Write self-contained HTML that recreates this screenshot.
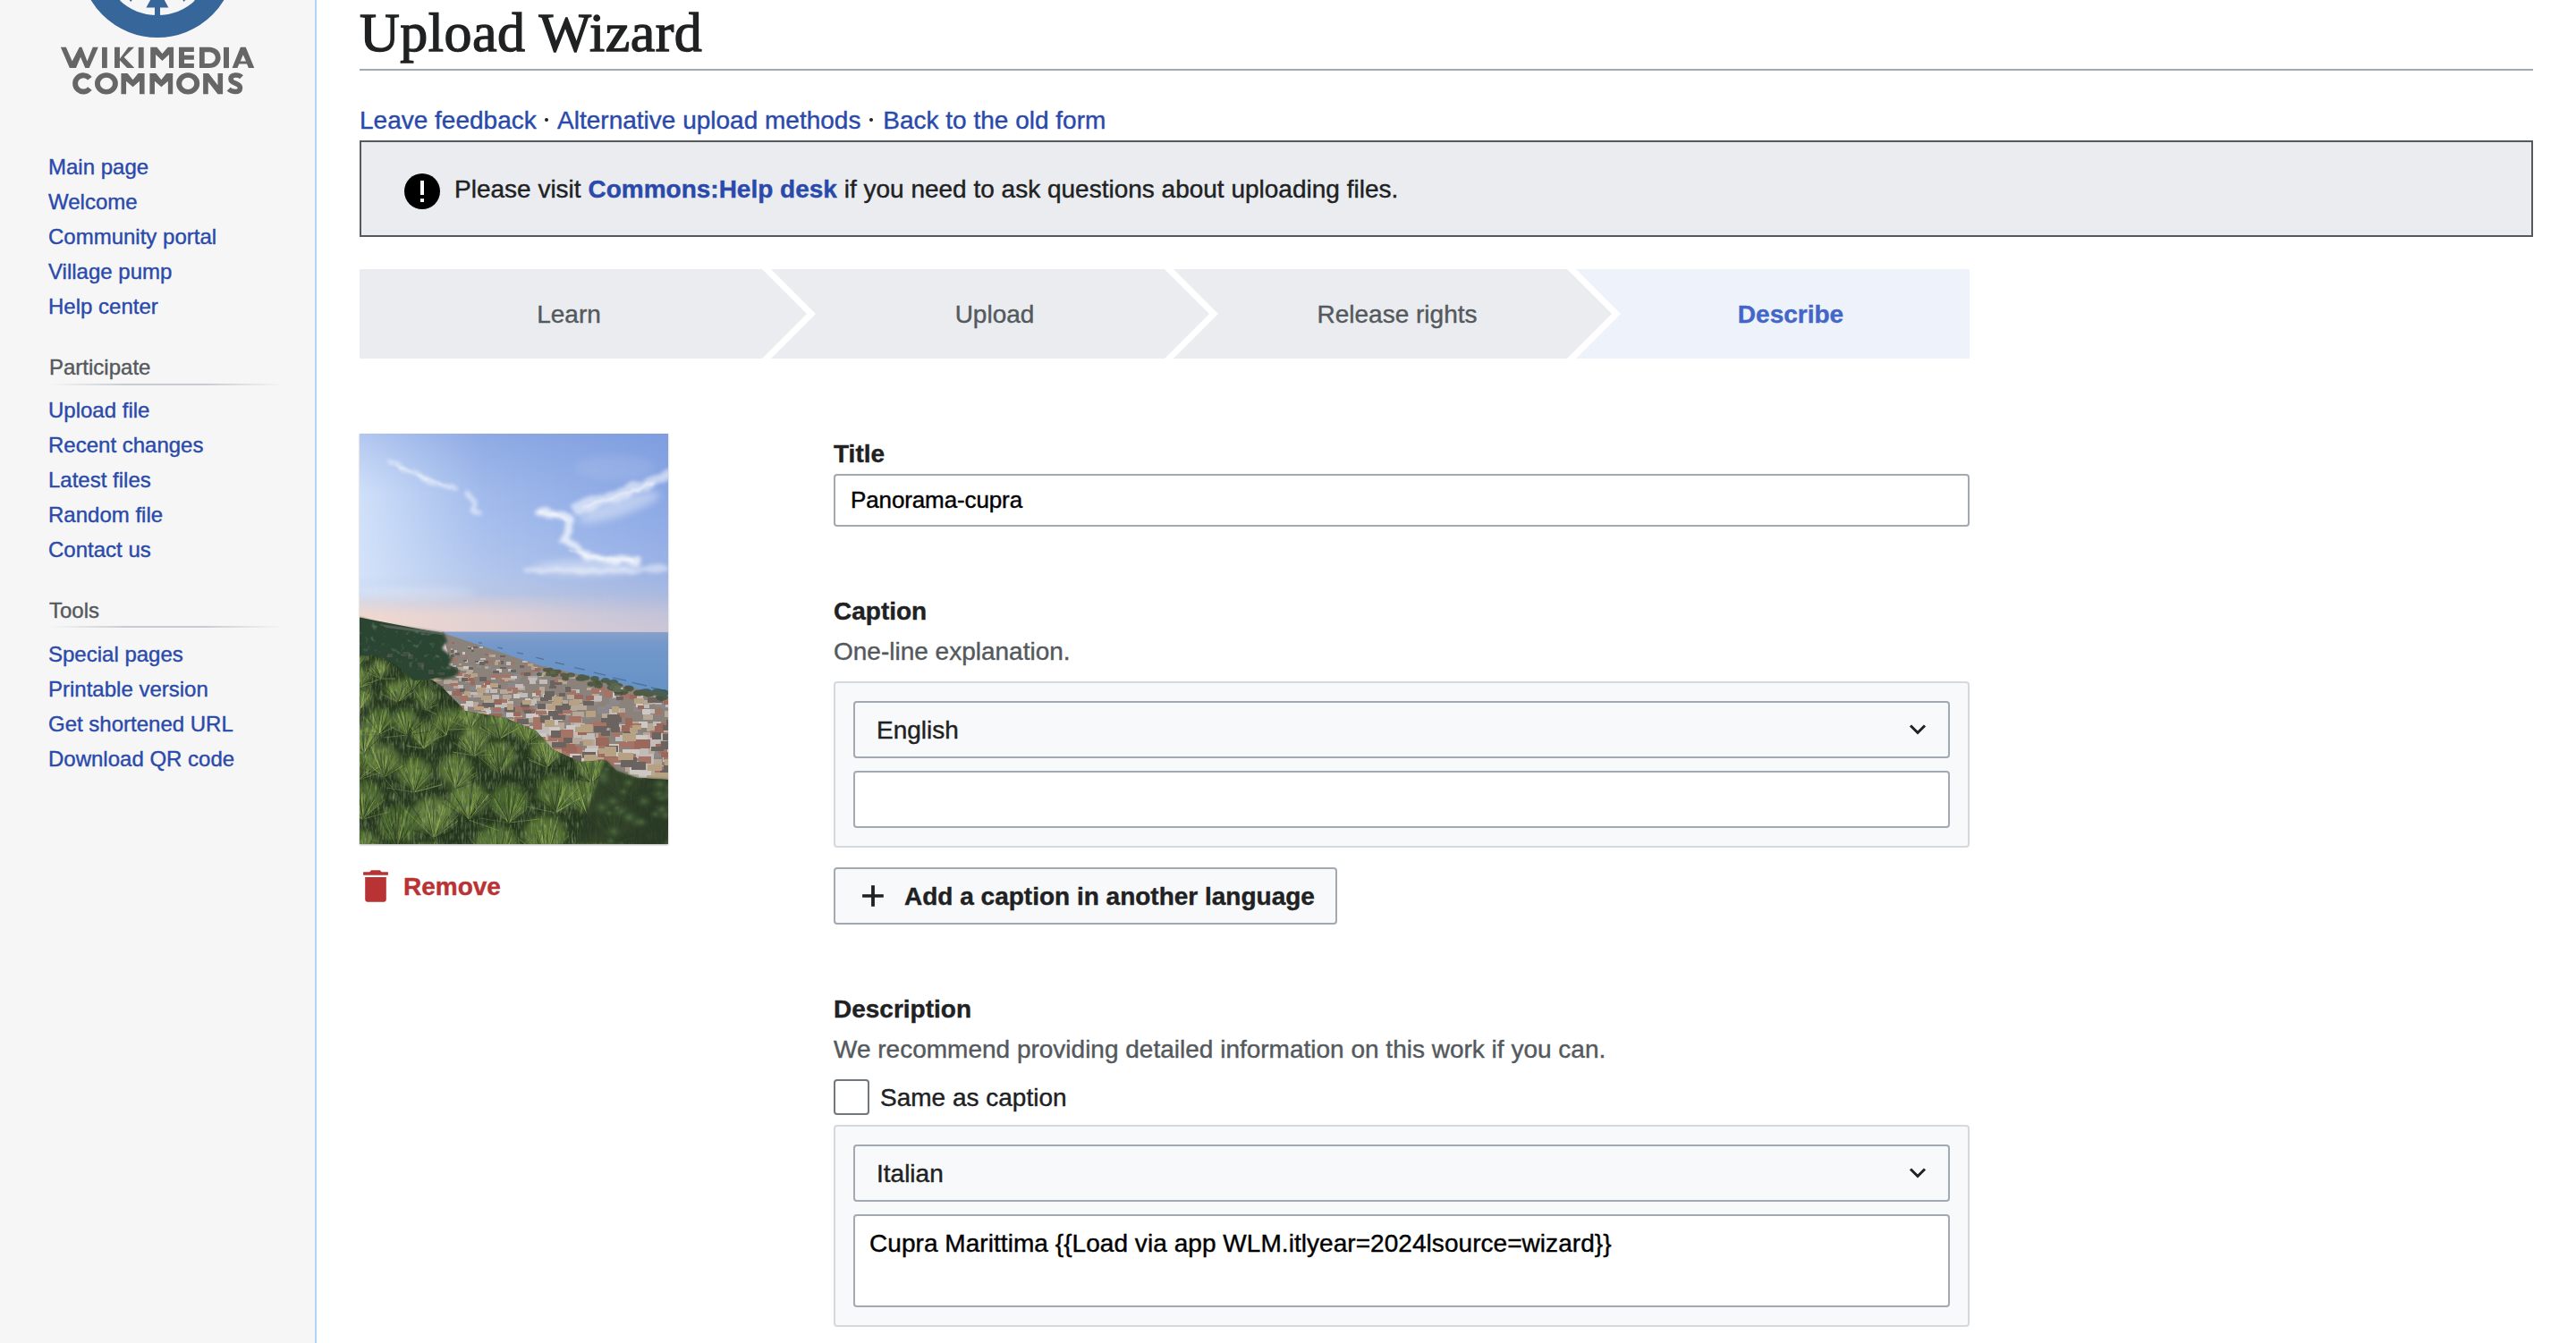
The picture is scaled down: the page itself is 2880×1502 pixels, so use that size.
<!DOCTYPE html>
<html><head><meta charset="utf-8">
<style>
html,body{margin:0;padding:0;}
body{width:2880px;height:1502px;overflow:hidden;background:#fff;position:relative;font-family:"Liberation Sans",sans-serif;color:#202122;-webkit-text-stroke-width:0.4px;}
.a{position:absolute;white-space:nowrap;line-height:1;}
#side{position:absolute;left:0;top:0;width:352px;height:1502px;background:#f6f6f6;border-right:2px solid #b0d4f6;}
.nav{position:absolute;left:54px;font-size:24px;line-height:39px;color:#2a4aab;white-space:nowrap;}
.nav div{height:39px;}
.ph{position:absolute;left:55px;font-size:24px;line-height:1;color:#54595d;}
.sep{position:absolute;left:55px;width:262px;height:2px;background:linear-gradient(to right,rgba(200,204,209,0),#c8ccd1 33%,#c8ccd1 66%,rgba(200,204,209,0));}
.lnk{color:#2a4aab;}
.box{position:absolute;box-sizing:border-box;border-radius:4px;}
</style></head><body>
<div id="side">
<svg style="position:absolute;left:0;top:0" width="352" height="120" viewBox="0 0 352 120">
<defs><clipPath id="ring"><rect x="0" y="0" width="352" height="120"/></clipPath></defs>
<circle cx="176" cy="-45" r="74.5" fill="none" stroke="#36669a" stroke-width="25"/>
<polygon points="176,-14.3 163.4,8.6 188.4,8.6" fill="#36669a"/><rect x="105" y="0" width="29.2" height="1.7" fill="#36669a"/><rect x="217.6" y="0" width="30" height="1.7" fill="#36669a"/><polygon points="144.5,0 147.5,0 146.6,1.9" fill="#36669a"/><polygon points="204.5,0 207.5,0 205.3,1.9" fill="#36669a"/>
<rect x="173" y="8" width="6" height="12" fill="#36669a"/>
<g transform="translate(60 45) scale(0.0892857)" fill="#666">
<polygon points="88,88 155,88 232,262 322,88 352,88 420,262 490,88 558,88 445,348 395,348 337,210 280,348 200,348"/>
<rect x="605" y="88" width="65" height="260"/>
<polygon points="762,88 828,88 828,232 935,88 1008,88 882,214 1012,348 920,348 828,252 828,348 762,348"/>
<rect x="1062" y="88" width="66" height="260"/>
<polygon points="1212,88 1292,88 1360,168 1430,88 1502,88 1502,348 1445,348 1445,178 1360,258 1278,178 1278,348 1212,348"/>
<polygon points="1568,88 1757,88 1757,145 1635,145 1635,188 1757,188 1757,243 1635,243 1635,290 1757,290 1757,348 1568,348"/>
<path fill-rule="evenodd" d="M1825 88H1945C2035 88 2090 145 2090 218C2090 290 2035 348 1945 348H1825ZM1890 147V292H1938C1993 292 2025 262 2025 218C2025 175 1993 147 1938 147Z"/>
<rect x="2128" y="88" width="67" height="260"/>
<path fill-rule="evenodd" d="M2340 88H2405L2512 348H2440L2420 298H2322L2300 348H2235ZM2338 262H2408L2372 182Z"/>
<path fill="none" stroke="#666" stroke-width="66" d="M452.4 479.2A102 102 0 1 0 452.4 604.8"/>
<path fill-rule="evenodd" d="M660 405A145 136.5 0 1 1 660 678A145 136.5 0 1 1 660 405ZM660 468A79 74 0 1 0 660 616A79 74 0 1 0 660 468Z"/>
<polygon points="845,415 925,415 992,495 1058,415 1138,415 1138,675 1075,675 1075,512 992,584 908,512 908,675 845,675"/>
<polygon points="1203,415 1282,415 1348,495 1412,415 1492,415 1492,675 1432,675 1432,512 1348,584 1265,512 1265,675 1203,675"/>
<path fill-rule="evenodd" d="M1682 405A146 136.5 0 1 1 1682 678A146 136.5 0 1 1 1682 405ZM1682 468A79 74 0 1 0 1682 616A79 74 0 1 0 1682 468Z"/>
<polygon points="1872,415 1940,415 2055,562 2055,415 2118,415 2118,675 2055,675 1935,522 1935,675 1872,675"/>
<path fill="none" stroke="#666" stroke-width="62" d="M2352 462C2320 430 2218 418 2218 488C2218 552 2335 528 2335 598C2335 666 2228 648 2192 612"/>
</g>
</svg>
<div class="nav" style="top:167px"><div>Main page</div><div>Welcome</div><div>Community portal</div><div>Village pump</div><div>Help center</div></div>
<div class="ph" style="top:399px">Participate</div>
<div class="sep" style="top:429px"></div>
<div class="nav" style="top:439px"><div>Upload file</div><div>Recent changes</div><div>Latest files</div><div>Random file</div><div>Contact us</div></div>
<div class="ph" style="top:671px">Tools</div>
<div class="sep" style="top:700px"></div>
<div class="nav" style="top:712px"><div>Special pages</div><div>Printable version</div><div>Get shortened URL</div><div>Download QR code</div></div>
</div>

<!-- title -->
<div class="a" style="left:402px;top:5px;font-family:'Liberation Serif',serif;font-size:62px;letter-spacing:0.5px;-webkit-text-stroke:1.3px #202122;color:#202122;">Upload Wizard</div>
<div style="position:absolute;left:402px;top:77px;width:2430px;height:2px;background:#a2a9b1;"></div>
<div class="a lnk" style="left:402px;top:121px;font-size:28px;">Leave feedback <span style="position:relative;color:transparent">·<i style="position:absolute;left:1.5px;top:13px;width:4px;height:4px;border-radius:50%;background:#202122"></i></span> Alternative upload methods <span style="position:relative;color:transparent">·<i style="position:absolute;left:1.5px;top:13px;width:4px;height:4px;border-radius:50%;background:#202122"></i></span> Back to the old form</div>

<!-- notice -->
<div class="box" style="left:402px;top:157px;width:2430px;height:108px;border:2px solid #54595d;background:#eaecf0;border-radius:0;"></div>
<svg style="position:absolute;left:452px;top:194px" width="40" height="40" viewBox="0 0 40 40"><circle cx="20" cy="20" r="20" fill="#000"/><rect x="18" y="8" width="4" height="16" fill="#fff"/><rect x="18" y="28.2" width="4" height="3.8" fill="#fff"/></svg>
<div class="a" style="left:508px;top:198px;font-size:28px;color:#202122;">Please visit <b class="lnk">Commons:Help desk</b> if you need to ask questions about uploading files.</div>

<!-- steps -->
<svg style="position:absolute;left:402px;top:301px" width="1800" height="100" viewBox="0 0 1800 100">
<polygon points="0,0 450,0 500,50 450,100 0,100" fill="#eaecf0"/>
<polygon points="460,0 900,0 950,50 900,100 460,100 510,50" fill="#eaecf0"/>
<polygon points="910,0 1350,0 1400,50 1350,100 910,100 960,50" fill="#eaecf0"/>
<polygon points="1360,0 1800,0 1800,100 1360,100 1410,50" fill="#eef2fa"/>
</svg>
<div class="a" style="left:536px;top:338px;width:200px;text-align:center;font-size:28px;color:#54595d;">Learn</div>
<div class="a" style="left:1012px;top:338px;width:200px;text-align:center;font-size:28px;color:#54595d;">Upload</div>
<div class="a" style="left:1412px;top:338px;width:300px;text-align:center;font-size:28px;color:#54595d;">Release rights</div>
<div class="a" style="left:1902px;top:338px;width:200px;text-align:center;font-size:28px;font-weight:bold;color:#4366c8;">Describe</div>

<!-- image -->
<svg id="img" style="position:absolute;left:402px;top:485px;box-shadow:0 1px 2px rgba(0,0,0,0.3)" width="345" height="459" viewBox="0 0 345 459">
<defs>
<linearGradient id="sky" x1="0" y1="0" x2="0" y2="225" gradientUnits="userSpaceOnUse">
<stop offset="0" stop-color="#809fe0"/><stop offset="0.45" stop-color="#97b2e9"/><stop offset="0.68" stop-color="#a5bbe8"/><stop offset="0.8" stop-color="#b3c0e0"/><stop offset="0.9" stop-color="#cdc8d8"/><stop offset="1" stop-color="#d6c9d2"/>
</linearGradient>
<linearGradient id="skyr" x1="0" y1="0" x2="345" y2="0" gradientUnits="userSpaceOnUse">
<stop offset="0" stop-color="#dbe9fc" stop-opacity="0.85"/><stop offset="0.4" stop-color="#d8e7fb" stop-opacity="0.25"/><stop offset="1" stop-color="#7896de" stop-opacity="0.2"/>
</linearGradient>
<linearGradient id="skyv" x1="0" y1="0" x2="0" y2="225" gradientUnits="userSpaceOnUse">
<stop offset="0" stop-color="#fff" stop-opacity="0.65"/><stop offset="0.3" stop-color="#fff" stop-opacity="1"/><stop offset="0.7" stop-color="#fff" stop-opacity="1"/><stop offset="1" stop-color="#fff" stop-opacity="0.3"/>
</linearGradient>
<mask id="skm"><rect width="345" height="225" fill="url(#skyv)"/></mask>
<linearGradient id="pinkx" x1="0" y1="0" x2="345" y2="0" gradientUnits="userSpaceOnUse">
<stop offset="0" stop-color="#f4d8ca" stop-opacity="0.9"/><stop offset="0.55" stop-color="#e8d3d0" stop-opacity="0.5"/><stop offset="1" stop-color="#c8c8dc" stop-opacity="0.15"/>
</linearGradient>
<linearGradient id="pinky" x1="0" y1="178" x2="0" y2="222" gradientUnits="userSpaceOnUse">
<stop offset="0" stop-color="#fff" stop-opacity="0"/><stop offset="0.6" stop-color="#fff" stop-opacity="1"/><stop offset="1" stop-color="#fff" stop-opacity="1"/>
</linearGradient>
<mask id="pm"><rect x="0" y="150" width="345" height="80" fill="url(#pinky)"/></mask>
<linearGradient id="sea" x1="0" y1="222" x2="0" y2="297" gradientUnits="userSpaceOnUse">
<stop offset="0" stop-color="#86a0cc"/><stop offset="0.2" stop-color="#7398c9"/><stop offset="1" stop-color="#6391c6"/>
</linearGradient>
<radialGradient id="pg" cx="0.5" cy="0.4" r="0.55">
<stop offset="0" stop-color="#93b250" stop-opacity="1"/><stop offset="0.45" stop-color="#6b8c3a" stop-opacity="0.95"/><stop offset="0.8" stop-color="#3f5a28" stop-opacity="0.6"/><stop offset="1" stop-color="#2a3d1e" stop-opacity="0"/>
</radialGradient>
<radialGradient id="tg" cx="0.5" cy="0.45" r="0.55">
<stop offset="0" stop-color="#4f6a3e" stop-opacity="0.9"/><stop offset="1" stop-color="#2a3d26" stop-opacity="0"/>
</radialGradient>
<filter id="cb" x="-20%" y="-50%" width="140%" height="200%"><feTurbulence type="fractalNoise" baseFrequency="0.06" numOctaves="2" seed="4" result="n"/><feDisplacementMap in="SourceGraphic" in2="n" scale="10" xChannelSelector="R" yChannelSelector="G" result="d"/><feGaussianBlur in="d" stdDeviation="2"/></filter>
<filter id="cb1" x="-20%" y="-50%" width="140%" height="200%"><feTurbulence type="fractalNoise" baseFrequency="0.12" numOctaves="2" seed="9" result="n"/><feDisplacementMap in="SourceGraphic" in2="n" scale="7" xChannelSelector="R" yChannelSelector="G" result="d"/><feGaussianBlur in="d" stdDeviation="0.8"/></filter>
<filter id="cb2" x="-30%" y="-80%" width="160%" height="260%"><feGaussianBlur stdDeviation="5"/></filter>
<filter id="b05"><feGaussianBlur stdDeviation="0.5"/></filter>
<filter id="ntex" x="0" y="0" width="1" height="1">
<feTurbulence type="turbulence" baseFrequency="0.35 0.07" numOctaves="2" seed="17"/>
<feColorMatrix type="matrix" values="0 0 0 0 0.62  0 0 0 0 0.76  0 0 0 0 0.36  2.2 0 0 0 -0.55"/>
<feComposite in2="SourceGraphic" operator="in"/>
</filter>
<filter id="ntex2" x="0" y="0" width="1" height="1">
<feTurbulence type="turbulence" baseFrequency="0.3 0.09" numOctaves="2" seed="23"/>
<feColorMatrix type="matrix" values="0 0 0 0 0.08  0 0 0 0 0.12  0 0 0 0 0.06  2.4 0 0 0 -0.5"/>
<feComposite in2="SourceGraphic" operator="in"/>
</filter>
<filter id="pblur" x="-10%" y="-10%" width="120%" height="120%"><feGaussianBlur stdDeviation="3.5"/></filter>
<filter id="b15" x="-10%" y="-10%" width="120%" height="120%"><feGaussianBlur stdDeviation="1.5"/></filter>
<filter id="b07"><feGaussianBlur stdDeviation="0.7"/></filter>
<filter id="texh" x="0" y="0" width="1" height="1">
<feTurbulence type="fractalNoise" baseFrequency="0.15" numOctaves="2" seed="13"/>
<feColorMatrix type="matrix" values="0 0 0 0 0.28  0 0 0 0 0.38  0 0 0 0 0.24  0 0 0 -3 1.2"/>
<feComposite in2="SourceGraphic" operator="in"/>
</filter>
<clipPath id="cpt"><polygon points="93.0,223.0 150.0,242.0 197.0,258.0 295.0,281.0 345.0,295.0 345.0,392.0 300.0,392.0 246.0,372.0 216.0,358.0 197.0,338.0 163.0,323.0 118.0,315.0 90.0,286.0 52.0,290.0 52.0,262.0 100.0,250.0"/></clipPath>
<clipPath id="cpp"><polygon points="0,248 20,249 40,258 60,276 80,275 90,281 118,310 163,318 197,332 216,353 246,367 275,365 287,377 310,385 345,387 345,459 0,459"/></clipPath>
<clipPath id="cpd"><polygon points="275.0,365.0 287.0,377.0 310.0,385.0 345.0,387.0 345.0,459.0 240.0,459.0"/></clipPath>
<clipPath id="cph"><polygon points="0.0,205.5 22.0,213.0 60.0,218.0 94.0,223.0 98.0,232.0 92.0,240.0 104.0,250.0 100.0,258.0 112.0,266.0 106.0,272.0 92.0,275.0 80.0,271.0 62.0,275.0 40.0,262.0 20.0,252.0 0.0,250.0"/></clipPath>
</defs>
<rect width="345" height="459" fill="url(#sky)"/>
<rect width="345" height="225" fill="url(#skyr)" mask="url(#skm)"/>
<rect x="0" y="150" width="345" height="80" fill="url(#pinkx)" mask="url(#pm)"/>
<g fill="#fff" filter="url(#cb2)" opacity="0.4">
<ellipse cx="285" cy="38" rx="45" ry="14" opacity="0.25"/>
<ellipse cx="290" cy="82" rx="48" ry="10" transform="rotate(-18 290 82)"/>
<ellipse cx="255" cy="150" rx="60" ry="8"/>
<ellipse cx="60" cy="178" rx="70" ry="6" opacity="0.6"/>
</g>
<g fill="none" stroke="#fff" stroke-linecap="round" filter="url(#cb)">
<path d="M33 31 Q62 45 86 55 Q100 61 110 63" stroke-width="4" stroke-opacity="0.55"/>
<path d="M120 67 Q131 76 125 85 Q128 89 134 90" stroke-width="6" stroke-opacity="0.55"/>
<path d="M243 84 Q290 70 345 46" stroke-width="12" stroke-opacity="0.55"/>
<path d="M200 88 Q222 88 233 96 Q238 108 228 118 Q240 130 258 138 Q285 143 310 142" stroke-width="8" stroke-opacity="0.7"/>
<path d="M186 152 Q250 158 343 150" stroke-width="6" stroke-opacity="0.45"/>
</g>
<g fill="none" stroke="#fff" stroke-linecap="round" filter="url(#cb1)" stroke-opacity="0.5">
<path d="M203 89 Q225 90 231 98" stroke-width="3"/>
<path d="M250 82 Q290 70 330 55" stroke-width="2.5"/>
<path d="M236 130 Q270 142 305 141" stroke-width="2.5"/>
<path d="M40 35 Q70 50 100 60" stroke-width="1.5"/>
</g>
<polygon points="92.0,221.5 345.0,222.0 345.0,297.0 295.0,282.0 197.0,259.0 150.0,243.0 93.0,225.0" fill="url(#sea)"/>

<path d="M133.0 233.6L137.0 234.4M154.4 239.2L160.0 240.4M175.9 244.8L183.0 246.3M197.3 250.4L206.0 252.3M218.8 256.0L229.0 258.2M240.2 261.6L252.0 264.2M261.7 267.2L275.0 270.1M283.1 272.8L298.0 276.1M304.6 278.4L321.0 282.0M326.0 284.0L344.0 288.0" stroke="#34475e" stroke-width="1.3" opacity="0.45" fill="none"/>
<polygon points="93.0,223.0 150.0,242.0 197.0,258.0 295.0,281.0 345.0,295.0 345.0,392.0 300.0,392.0 246.0,372.0 216.0,358.0 197.0,338.0 163.0,323.0 118.0,315.0 90.0,286.0 52.0,290.0 52.0,262.0 100.0,250.0" fill="#8c847e"/>
<g clip-path="url(#cpt)" filter="url(#b07)"><path fill="#8f8d92" d="M183 317h14v6h-14zM131 258h5v4h-5zM202 290h10v5h-10zM201 265h5v4h-5zM331 301h11v5h-11zM310 340h15v9h-15zM342 383h11v13h-11zM122 311h13v7h-13zM123 283h7v4h-7zM166 279h10v5h-10zM209 345h15v10h-15zM161 314h9v6h-9zM148 280h8v3h-8zM198 289h6v6h-6zM319 386h19v13h-19zM141 307h13v8h-13zM202 308h12v7h-12zM103 248h3v3h-3zM62 263h8v3h-8zM311 301h8v7h-8zM263 376h10v8h-10zM197 270h5v4h-5zM328 353h15v9h-15zM173 269h8v5h-8zM306 370h10v8h-10zM306 304h9v7h-9zM153 295h6v5h-6zM254 299h10v5h-10zM219 310h7v6h-7zM225 323h15v5h-15zM307 343h11v9h-11zM309 346h10v9h-10zM236 294h11v5h-11zM315 383h11v11h-11zM242 341h17v5h-17zM123 292h6v4h-6zM177 303h8v5h-8zM212 290h7v4h-7zM143 304h8v7h-8zM340 378h11v11h-11zM308 302h6v5h-6zM193 268h5v3h-5zM340 338h16v9h-16zM154 307h8v7h-8zM223 311h9v7h-9zM148 263h6v3h-6zM122 259h5v4h-5zM337 300h10v7h-10zM311 321h10v7h-10zM219 329h11v5h-11zM192 331h16v6h-16zM195 304h8v7h-8zM140 260h7v3h-7zM259 298h8v5h-8zM171 274h8v4h-8zM314 335h10v9h-10zM225 268h5v5h-5zM245 340h13v7h-13zM210 310h9v7h-9zM98 228h2v2h-2zM298 333h16v6h-16zM303 381h15v9h-15zM293 338h13v9h-13zM149 293h10v6h-10zM154 302h7v5h-7zM99 261h7v4h-7zM279 296h9v5h-9zM164 283h5v3h-5zM142 245h5v3h-5zM137 273h5v3h-5zM297 374h18v10h-18zM232 324h15v5h-15zM259 346h9v10h-9zM266 305h12v8h-12zM263 358h14v7h-14zM251 315h8v4h-8zM140 289h6v5h-6zM287 280h10v4h-10zM234 325h8v9h-8zM115 247h3v3h-3zM275 302h13v5h-13zM283 319h10v5h-10zM215 316h9v5h-9zM312 383h14v10h-14zM232 315h13v5h-13zM194 271h5v3h-5zM174 324h9v7h-9zM160 304h7v7h-7zM329 299h11v5h-11zM195 265h5v5h-5zM256 373h14v8h-14zM195 273h8v4h-8zM292 288h10v4h-10zM230 347h16v10h-16zM130 317h12v8h-12zM297 356h10v7h-10zM228 314h7v6h-7zM279 299h12v4h-12z"/><path fill="#c8bba8" d="M201 329h14v5h-14zM340 386h19v11h-19zM344 365h17v8h-17zM236 354h12v6h-12zM113 268h8v5h-8zM301 326h10v9h-10zM55 268h6v3h-6zM53 273h8v3h-8zM317 334h12v9h-12zM320 372h14v10h-14zM297 366h17v12h-17zM333 338h10v7h-10zM285 383h16v11h-16zM263 361h16v10h-16zM238 311h13v6h-13zM301 387h17v11h-17zM209 292h11v7h-11zM107 261h6v3h-6zM161 292h9v4h-9zM269 360h19v8h-19zM202 319h8v5h-8zM329 294h9v5h-9zM217 323h12v8h-12zM320 371h10v7h-10zM212 329h11v7h-11zM234 353h11v8h-11zM289 285h9v6h-9zM212 349h18v8h-18zM72 258h6v2h-6zM264 340h11v6h-11zM142 315h13v6h-13zM260 325h9v5h-9zM343 358h11v9h-11zM341 310h12v7h-12zM329 329h9v5h-9zM220 341h11v10h-11zM317 314h11v6h-11zM163 323h14v5h-14zM164 319h8v7h-8zM205 311h10v8h-10zM316 346h14v9h-14zM111 272h9v5h-9zM116 274h8v3h-8zM118 273h9v5h-9zM282 356h11v8h-11zM121 300h12v5h-12zM152 253h5v2h-5zM254 284h6v3h-6zM127 289h11v6h-11zM264 335h9v6h-9zM260 291h8v6h-8zM236 318h13v8h-13zM176 289h6v5h-6zM121 238h3v2h-3zM196 322h11v6h-11zM57 281h10v5h-10zM141 283h10v4h-10zM255 339h17v9h-17zM233 305h10v5h-10zM271 313h8v5h-8zM93 252h3v4h-3zM234 269h5v4h-5zM343 297h11v6h-11zM115 291h10v4h-10zM277 315h14v8h-14zM55 280h6v5h-6zM227 298h6v5h-6zM157 286h9v5h-9zM304 383h21v7h-21zM208 313h7v7h-7zM73 266h4v5h-4zM166 273h8v3h-8zM159 273h7v4h-7zM203 288h9v6h-9zM119 266h7v4h-7zM276 359h10v10h-10zM208 334h16v9h-16zM281 279h9v4h-9zM330 299h8v4h-8zM105 281h5v4h-5zM275 290h6v4h-6zM286 307h11v6h-11zM159 302h10v5h-10zM202 286h5v5h-5zM289 358h11v10h-11zM328 331h12v7h-12zM243 354h16v8h-16zM331 327h15v8h-15zM208 302h11v5h-11zM282 290h9v6h-9zM243 336h12v8h-12zM94 275h9v5h-9zM258 341h11v10h-11zM210 321h8v5h-8zM102 268h7v4h-7zM188 271h7v4h-7zM123 272h5v3h-5zM149 320h12v4h-12zM147 247h5v3h-5zM198 307h12v6h-12zM235 270h6v4h-6zM237 302h6v5h-6zM229 338h17v9h-17zM175 324h13v7h-13zM182 325h8v9h-8zM242 302h12v7h-12zM196 332h11v7h-11zM160 292h8v6h-8zM227 276h5v4h-5zM240 302h11v6h-11zM224 335h11v7h-11zM328 364h10v8h-10zM102 240h2v3h-2zM264 356h10v7h-10zM277 347h11v8h-11zM321 324h15v9h-15zM139 297h11v6h-11zM315 369h15v6h-15zM71 264h7v3h-7zM172 315h10v7h-10zM311 381h12v9h-12zM327 380h21v12h-21zM122 300h10v6h-10zM120 263h7v4h-7zM200 268h6v4h-6zM146 282h10v4h-10zM317 390h22v13h-22zM231 328h15v6h-15zM253 364h17v7h-17zM70 272h4v5h-4zM208 344h17v9h-17zM300 372h14v12h-14zM223 332h13v5h-13zM319 349h11v9h-11zM305 344h10v5h-10zM258 295h12v5h-12zM201 283h6v6h-6zM318 298h10v5h-10zM189 316h13v7h-13zM302 322h14v7h-14zM322 339h11v8h-11zM228 311h8v4h-8zM212 325h11v6h-11zM213 265h6v4h-6zM229 334h10v9h-10zM331 338h10v9h-10zM164 286h7v4h-7zM172 323h8v6h-8zM232 292h11v5h-11zM239 297h10v4h-10zM191 271h8v4h-8zM179 326h11v8h-11zM194 295h9v4h-9zM232 305h10v5h-10zM271 324h8v8h-8zM285 328h13v5h-13zM101 276h9v3h-9zM140 260h4v3h-4zM223 337h10v8h-10zM100 246h3v3h-3zM175 282h10v5h-10zM255 370h19v11h-19zM232 328h12v6h-12zM279 282h9v4h-9zM113 261h7v4h-7z"/><path fill="#d9d6d6" d="M187 297h11v5h-11zM182 254h6v2h-6zM147 272h5v3h-5zM160 299h12v5h-12zM319 341h17v5h-17zM307 293h10v6h-10zM310 346h12v9h-12zM192 261h7v3h-7zM130 281h8v5h-8zM325 345h10v8h-10zM316 303h8v4h-8zM236 331h12v9h-12zM313 358h16v11h-16zM151 302h6v5h-6zM329 335h11v8h-11zM339 361h16v6h-16zM264 284h6v5h-6zM164 255h5v4h-5zM104 259h4v4h-4zM202 330h16v6h-16zM283 285h9v6h-9zM275 347h11v7h-11zM67 280h8v6h-8zM166 263h4v3h-4zM188 327h15v6h-15zM237 286h9v4h-9zM312 368h16v9h-16zM108 270h7v3h-7zM174 280h9v5h-9zM157 301h8v6h-8zM194 333h15v9h-15zM110 281h6v4h-6zM194 322h13v7h-13zM323 308h7v5h-7zM54 274h5v3h-5zM135 251h6v2h-6zM134 238h4v2h-4zM306 353h17v10h-17zM65 282h8v6h-8zM217 312h10v5h-10zM190 275h7v5h-7zM201 275h9v5h-9zM57 273h4v5h-4zM254 349h13v8h-13zM94 288h9v4h-9zM327 296h10v6h-10zM316 337h10v7h-10zM135 254h4v2h-4zM339 348h17v7h-17zM189 273h9v3h-9zM338 325h8v8h-8zM286 337h15v7h-15zM139 286h6v4h-6zM106 242h3v3h-3zM148 292h8v5h-8zM249 335h14v7h-14zM319 337h8v9h-8zM342 300h6v6h-6zM136 305h10v5h-10zM298 390h20v8h-20zM263 341h11v9h-11zM74 283h6v4h-6zM122 289h10v3h-10zM287 325h11v5h-11zM328 322h9v5h-9zM339 325h15v7h-15zM146 286h8v4h-8zM240 324h12v7h-12zM331 389h17v14h-17zM228 330h12v8h-12zM155 297h11v4h-11zM285 359h12v11h-12zM179 290h9v5h-9zM109 306h12v5h-12zM205 323h11v7h-11zM341 363h18v10h-18zM123 239h4v2h-4zM92 266h4v4h-4zM260 293h11v6h-11zM327 392h18v12h-18zM334 371h16v12h-16zM186 298h10v6h-10zM314 371h14v6h-14zM341 357h13v7h-13zM279 308h12v6h-12zM309 385h12v13h-12z"/><path fill="#ebe8e5" d="M197 335h12v6h-12zM276 290h10v5h-10zM298 339h17v8h-17zM208 308h11v4h-11zM212 308h13v6h-13zM99 257h5v3h-5zM312 377h14v10h-14zM164 312h10v5h-10zM138 294h6v4h-6zM113 302h8v5h-8zM212 328h12v9h-12zM118 253h3v3h-3zM141 309h6v5h-6zM294 353h19v6h-19zM343 347h12v9h-12zM205 291h9v6h-9zM169 271h7v3h-7zM218 316h9v5h-9zM119 299h8v6h-8zM199 318h10v5h-10zM139 279h8v6h-8zM209 319h13v7h-13zM302 372h12v9h-12zM316 308h9v6h-9zM130 254h6v3h-6zM172 291h7v5h-7zM252 352h14v9h-14zM185 296h6v5h-6zM309 299h8v7h-8zM186 312h14v6h-14zM116 260h6v3h-6zM312 322h10v7h-10zM333 375h17v12h-17zM193 290h8v4h-8zM231 353h15v10h-15zM306 337h16v7h-16zM223 350h18v7h-18zM115 244h3v3h-3zM273 353h17v10h-17zM285 282h9v4h-9zM153 263h6v4h-6zM231 363h16v7h-16zM242 363h17v9h-17zM115 292h6v5h-6zM225 334h13v7h-13zM231 326h11v7h-11zM278 347h12v8h-12z"/><path fill="#b0705e" d="M334 351h10v7h-10zM330 372h17v9h-17zM226 272h5v5h-5zM339 334h14v8h-14zM234 287h8v5h-8zM218 275h8v3h-8zM273 289h10v6h-10zM101 279h9v3h-9zM198 339h10v5h-10zM298 390h22v7h-22zM170 255h4v3h-4zM215 270h8v3h-8zM184 257h4v3h-4zM175 328h8v7h-8zM267 375h11v10h-11zM216 345h12v10h-12zM117 249h3v3h-3zM292 288h7v5h-7zM340 356h16v9h-16zM318 391h21v11h-21zM121 274h6v3h-6zM291 290h7v5h-7zM340 297h9v5h-9zM227 270h5v5h-5zM218 314h13v5h-13zM171 284h6v6h-6zM250 369h12v8h-12zM59 275h7v4h-7zM136 281h6v3h-6zM222 341h13v9h-13zM165 284h5v4h-5zM63 271h8v5h-8zM154 269h8v3h-8zM211 338h10v6h-10zM145 253h4v4h-4zM295 358h14v11h-14zM61 281h9v5h-9zM267 283h7v4h-7zM266 354h10v8h-10zM267 343h10v8h-10zM197 310h12v4h-12zM283 331h8v8h-8zM234 316h14v7h-14zM272 286h8v5h-8zM296 335h13v5h-13zM112 293h9v6h-9zM184 305h8v7h-8zM303 346h11v7h-11zM208 265h5v3h-5zM194 317h14v7h-14zM330 379h20v12h-20zM296 291h7v5h-7zM225 348h13v10h-13zM197 287h5v6h-5zM333 380h14v13h-14zM325 332h8v8h-8zM71 268h7v4h-7zM251 327h8v8h-8zM194 322h10v9h-10zM162 269h6v4h-6zM340 324h14v5h-14zM310 391h22v13h-22zM290 345h16v6h-16zM195 287h8v3h-8zM233 349h16v9h-16zM300 324h15v5h-15zM100 251h5v3h-5zM218 308h9v6h-9zM259 285h9v6h-9zM147 269h9v4h-9zM219 337h17v5h-17zM58 261h4v3h-4zM227 309h10v4h-10zM218 356h17v6h-17zM186 266h7v3h-7zM273 361h19v7h-19zM260 277h7v3h-7zM149 306h9v5h-9zM156 297h9v4h-9zM266 371h19v8h-19zM266 364h18v6h-18zM266 326h10v6h-10zM257 323h14v8h-14zM312 361h14v8h-14zM340 322h8v5h-8zM335 378h21v10h-21zM109 304h8v6h-8zM225 331h14v9h-14zM295 359h11v8h-11zM331 308h7v6h-7zM268 367h15v9h-15zM222 266h7v3h-7zM117 269h5v3h-5zM108 267h7v4h-7zM267 335h8v9h-8zM173 317h11v6h-11zM175 304h12v6h-12zM140 253h4v2h-4zM97 238h4v2h-4zM299 341h10v9h-10zM288 312h9v5h-9zM283 382h21v10h-21zM105 252h5v3h-5zM157 275h5v3h-5zM263 322h14v9h-14z"/><path fill="#a26050" d="M159 319h8v6h-8zM340 299h6v4h-6zM270 354h17v8h-17zM108 286h6v4h-6zM331 347h11v6h-11zM140 276h7v5h-7zM297 318h8v8h-8zM103 233h3v2h-3zM293 326h9v8h-9zM302 292h8v5h-8zM122 273h6v3h-6zM297 282h7v4h-7zM307 343h10v9h-10zM123 269h7v3h-7zM180 267h8v3h-8zM253 293h9v5h-9zM244 328h10v9h-10zM145 313h14v5h-14zM195 262h7v4h-7zM104 288h10v5h-10zM178 327h12v9h-12zM151 297h8v6h-8zM265 372h16v10h-16zM184 308h12v5h-12zM311 304h7v4h-7zM330 327h10v8h-10zM124 276h5v5h-5zM172 311h8v5h-8zM255 293h6v4h-6zM140 246h4v2h-4zM306 387h20v13h-20zM332 324h9v7h-9zM240 292h10v5h-10zM132 303h12v4h-12zM337 356h12v6h-12zM309 342h16v10h-16zM225 347h16v8h-16zM182 304h8v7h-8zM264 340h15v9h-15zM231 350h12v7h-12z"/><path fill="#5c5856" d="M267 375h18v11h-18zM315 389h23v10h-23zM75 260h6v3h-6zM345 373h11v8h-11zM127 238h5v2h-5zM319 387h12v10h-12zM202 295h9v4h-9zM207 288h11v5h-11zM238 360h10v9h-10zM184 267h7v4h-7zM281 328h10v6h-10zM216 304h11v5h-11zM202 315h11v8h-11zM270 332h10v6h-10zM312 385h18v10h-18zM287 294h8v4h-8zM67 274h5v5h-5zM116 253h4v2h-4zM300 362h10v7h-10zM140 301h11v5h-11zM295 333h8v7h-8zM322 295h9v6h-9zM212 282h8v3h-8zM327 334h10v8h-10zM218 278h8v3h-8zM227 302h9v6h-9zM270 318h14v5h-14zM214 332h11v8h-11zM221 307h6v6h-6zM339 326h8v6h-8zM157 248h6v2h-6zM210 289h7v5h-7zM148 281h10v4h-10zM285 289h9v4h-9zM228 340h10v6h-10zM230 283h6v6h-6zM250 299h12v5h-12zM112 285h6v4h-6zM326 350h14v5h-14zM222 304h13v5h-13zM276 321h14v8h-14zM304 367h16v9h-16zM102 247h4v3h-4zM104 261h5v3h-5zM249 356h15v6h-15zM107 245h5v3h-5zM74 260h4v3h-4zM339 378h18v12h-18zM340 370h13v7h-13zM264 276h8v5h-8zM176 319h13v6h-13zM277 314h14v6h-14zM292 364h14v9h-14zM275 349h14v7h-14zM216 315h14v5h-14zM102 242h3v3h-3zM157 261h7v2h-7zM199 302h9v6h-9zM134 255h6v4h-6zM105 262h5v4h-5zM339 336h13v7h-13zM134 272h8v5h-8zM228 362h13v7h-13zM213 276h5v5h-5zM343 320h14v9h-14zM206 292h9v6h-9zM180 301h10v5h-10zM88 282h6v5h-6zM282 317h11v6h-11zM337 344h13v9h-13zM122 261h5v3h-5zM69 281h6v5h-6zM114 273h7v4h-7zM158 254h3v4h-3zM121 239h4v2h-4zM211 310h11v6h-11zM137 301h10v4h-10zM262 327h14v7h-14zM149 265h7v3h-7zM66 276h7v5h-7zM77 263h5v4h-5zM184 309h8v4h-8zM169 264h6v3h-6zM162 306h12v5h-12zM136 316h11v8h-11zM125 242h3v2h-3zM74 278h8v4h-8zM129 254h4v2h-4zM331 294h8v7h-8zM336 376h17v7h-17zM215 345h16v6h-16zM179 259h5v3h-5zM213 277h5v5h-5zM223 290h7v4h-7zM139 254h5v3h-5z"/><path fill="#c9b088" d="M236 298h10v6h-10zM212 353h14v6h-14zM169 324h11v9h-11zM321 382h21v9h-21zM294 335h15v9h-15zM192 260h4v4h-4zM250 342h10v7h-10zM274 350h13v11h-13zM205 267h7v3h-7zM101 265h5v4h-5zM146 279h9v5h-9zM217 294h10v6h-10zM210 304h9v5h-9zM289 357h17v8h-17zM117 288h7v5h-7zM282 305h8v7h-8zM336 388h23v9h-23zM241 328h14v6h-14zM215 300h11v4h-11zM83 273h9v4h-9zM124 268h8v4h-8zM306 385h11v7h-11zM253 310h11v7h-11zM151 255h4v4h-4zM132 311h10v4h-10zM165 302h7v7h-7zM72 273h8v5h-8zM128 305h11v4h-11zM322 370h16v7h-16zM341 364h14v7h-14zM136 293h11v5h-11zM207 320h11v8h-11zM330 379h20v12h-20zM247 325h14v9h-14zM305 326h10v5h-10zM251 359h14v11h-14zM111 257h3v2h-3zM131 284h10v6h-10zM234 298h9v6h-9zM182 298h10v5h-10zM70 273h9v5h-9zM188 257h6v3h-6zM302 329h9v5h-9zM267 352h11v6h-11zM222 275h8v3h-8zM307 296h11v6h-11zM145 247h3v3h-3z"/></g>
<polygon points="93.0,223.0 150.0,242.0 197.0,258.0 295.0,281.0 345.0,295.0 345.0,392.0 300.0,392.0 246.0,372.0 216.0,358.0 197.0,338.0 163.0,323.0 118.0,315.0 90.0,286.0 52.0,290.0 52.0,262.0 100.0,250.0" fill="#8a7f78" opacity="0.3"/>
<g fill="#3d4f34" opacity="0.75" filter="url(#b05)"><ellipse cx="222" cy="266" rx="3.6" ry="2.3"/><ellipse cx="267" cy="282" rx="4.8" ry="2.9"/><ellipse cx="282" cy="284" rx="5.3" ry="3.1"/><ellipse cx="208" cy="264" rx="3.2" ry="2.1"/><ellipse cx="285" cy="285" rx="5.3" ry="3.2"/><ellipse cx="213" cy="264" rx="3.4" ry="2.2"/><ellipse cx="246" cy="274" rx="4.3" ry="2.6"/><ellipse cx="248" cy="272" rx="4.3" ry="2.7"/><ellipse cx="211" cy="269" rx="3.3" ry="2.1"/><ellipse cx="338" cy="295" rx="6.8" ry="3.9"/><ellipse cx="333" cy="289" rx="6.7" ry="3.8"/><ellipse cx="289" cy="282" rx="5.5" ry="3.2"/><ellipse cx="323" cy="291" rx="6.4" ry="3.7"/><ellipse cx="289" cy="288" rx="5.5" ry="3.2"/><ellipse cx="339" cy="290" rx="6.8" ry="3.9"/><ellipse cx="263" cy="274" rx="4.8" ry="2.9"/><ellipse cx="281" cy="279" rx="5.2" ry="3.1"/><ellipse cx="301" cy="285" rx="5.8" ry="3.4"/><ellipse cx="201" cy="269" rx="3.0" ry="2.0"/><ellipse cx="218" cy="266" rx="3.5" ry="2.3"/><ellipse cx="275" cy="276" rx="5.1" ry="3.0"/><ellipse cx="312" cy="290" rx="6.1" ry="3.5"/><ellipse cx="217" cy="270" rx="3.5" ry="2.2"/><ellipse cx="219" cy="269" rx="3.5" ry="2.3"/><ellipse cx="214" cy="266" rx="3.4" ry="2.2"/><ellipse cx="265" cy="279" rx="4.8" ry="2.9"/><ellipse cx="295" cy="289" rx="5.6" ry="3.3"/><ellipse cx="249" cy="274" rx="4.3" ry="2.7"/><ellipse cx="230" cy="274" rx="3.8" ry="2.4"/><ellipse cx="253" cy="273" rx="4.5" ry="2.7"/><ellipse cx="228" cy="270" rx="3.8" ry="2.4"/><ellipse cx="321" cy="289" rx="6.3" ry="3.7"/><ellipse cx="318" cy="289" rx="6.3" ry="3.6"/><ellipse cx="284" cy="280" rx="5.3" ry="3.2"/><ellipse cx="259" cy="280" rx="4.6" ry="2.8"/><ellipse cx="212" cy="267" rx="3.3" ry="2.2"/><ellipse cx="237" cy="270" rx="4.0" ry="2.5"/><ellipse cx="249" cy="272" rx="4.4" ry="2.7"/><ellipse cx="284" cy="278" rx="5.3" ry="3.2"/><ellipse cx="235" cy="270" rx="4.0" ry="2.5"/></g>
<polygon points="0,205.5 90,223 88,236 90,258 90,272 58,280 0,262" fill="#2e4530"/>
<polygon points="0.0,205.5 22.0,213.0 60.0,218.0 94.0,223.0 98.0,232.0 92.0,240.0 104.0,250.0 100.0,258.0 112.0,266.0 106.0,272.0 92.0,275.0 80.0,271.0 62.0,275.0 40.0,262.0 20.0,252.0 0.0,250.0" fill="#2c4430" filter="url(#b15)"/>
<polygon points="0,205.5 94,223 110,270 0,262" fill="#000" filter="url(#texh)" opacity="0.5" clip-path="url(#cph)"/>
<polygon points="22,213 60,218 94,222.5 92,225 60,221 30,217" fill="#5a675e" opacity="0.8"/>
<path d="M34 267h7v5h-6zM31 246h6v4h-6zM87 267h8v3h-6zM22 251h6v3h-6zM48 244h8v3h-6zM45 246h8v3h-6zM55 247h5v5h-6zM77 264h6v5h-6zM97 260h5v3h-6zM64 256h8v5h-6z" fill="#7a6a5e" opacity="0.35"/>
<polygon points="0.0,248.0 20.0,249.0 40.0,258.0 60.0,276.0 80.0,275.0 90.0,281.0 118.0,310.0 163.0,318.0 197.0,332.0 216.0,353.0 246.0,367.0 275.0,365.0 287.0,377.0 310.0,385.0 345.0,387.0 345.0,459.0 0.0,459.0" fill="#24361d"/>
<g clip-path="url(#cpp)"><g filter="url(#pblur)" opacity="0.68"><ellipse cx="-3" cy="250" rx="9" ry="8" fill="#789c45"/><ellipse cx="22" cy="262" rx="10" ry="8" fill="#84a64e"/><ellipse cx="-0" cy="272" rx="11" ry="9" fill="#84a64e"/><ellipse cx="59" cy="276" rx="11" ry="9" fill="#5f8236"/><ellipse cx="41" cy="287" rx="12" ry="10" fill="#84a64e"/><ellipse cx="2" cy="294" rx="12" ry="10" fill="#84a64e"/><ellipse cx="74" cy="294" rx="12" ry="10" fill="#789c45"/><ellipse cx="124" cy="315" rx="14" ry="12" fill="#84a64e"/><ellipse cx="22" cy="320" rx="14" ry="12" fill="#6d913e"/><ellipse cx="98" cy="320" rx="14" ry="12" fill="#84a64e"/><ellipse cx="51" cy="321" rx="14" ry="12" fill="#789c45"/><ellipse cx="156" cy="324" rx="15" ry="12" fill="#789c45"/><ellipse cx="187" cy="330" rx="15" ry="13" fill="#84a64e"/><ellipse cx="73" cy="335" rx="15" ry="13" fill="#6d913e"/><ellipse cx="5" cy="339" rx="16" ry="14" fill="#84a64e"/><ellipse cx="128" cy="342" rx="16" ry="14" fill="#84a64e"/><ellipse cx="209" cy="354" rx="17" ry="14" fill="#84a64e"/><ellipse cx="157" cy="360" rx="17" ry="15" fill="#789c45"/><ellipse cx="26" cy="364" rx="18" ry="15" fill="#84a64e"/><ellipse cx="-5" cy="367" rx="18" ry="15" fill="#6d913e"/><ellipse cx="260" cy="370" rx="18" ry="16" fill="#789c45"/><ellipse cx="107" cy="376" rx="19" ry="16" fill="#789c45"/><ellipse cx="61" cy="379" rx="19" ry="16" fill="#789c45"/><ellipse cx="295" cy="389" rx="20" ry="17" fill="#6d913e"/><ellipse cx="220" cy="401" rx="21" ry="18" fill="#6d913e"/><ellipse cx="255" cy="405" rx="21" ry="18" fill="#789c45"/><ellipse cx="5" cy="407" rx="21" ry="18" fill="#5f8236"/><ellipse cx="121" cy="408" rx="21" ry="18" fill="#789c45"/><ellipse cx="167" cy="411" rx="21" ry="18" fill="#5f8236"/><ellipse cx="82" cy="426" rx="23" ry="19" fill="#84a64e"/><ellipse cx="287" cy="432" rx="23" ry="20" fill="#6d913e"/><ellipse cx="44" cy="437" rx="23" ry="20" fill="#5f8236"/><ellipse cx="207" cy="449" rx="24" ry="21" fill="#6d913e"/><ellipse cx="153" cy="461" rx="25" ry="22" fill="#6d913e"/><ellipse cx="-3" cy="465" rx="26" ry="22" fill="#789c45"/><ellipse cx="264" cy="470" rx="26" ry="22" fill="#84a64e"/><ellipse cx="76" cy="480" rx="27" ry="23" fill="#5f8236"/></g><g filter="url(#b05)"><path fill="none" stroke="#1a2613" stroke-width="1" stroke-opacity="0.45" d="M-2 260L1 245M-2 260L-9 247M-2 260L-0 245M-2 260L-15 267M24 274L14 265M24 274L31 261M-1 284L15 293M-1 284L-4 267M58 288L55 273M58 288L48 296M58 288L69 276M43 300L35 293M43 300L59 295M43 300L26 288M1 308L-0 294M1 308L10 285M1 308L0 294M1 308L-1 284M1 308L-15 301M74 308L64 292M74 308L76 285M74 308L71 294M74 308L64 287M74 308L62 294M124 330L127 302M124 330L128 306M22 336L22 317M22 336L28 307M22 336L23 314M97 337L100 309M97 337L116 319M97 337L110 318M97 337L85 309M97 337L101 321M97 337L104 316M97 337L92 320M97 337L111 311M53 337L73 317M53 337L67 310M53 337L34 329M53 337L70 325M187 347L167 328M187 347L190 318M187 347L198 336M187 347L193 334M187 347L197 327M72 352L74 325M72 352L51 346M72 352L57 340M72 352L65 331M72 352L76 320M5 357L25 338M5 357L22 330M5 357L8 336M5 357L16 334M5 357L-11 340M5 357L-3 334M128 360L119 347M128 360L115 343M128 360L140 335M128 360L123 341M128 360L128 336M210 373L223 352M210 373L212 336M210 373L198 344M210 373L229 359M156 380L146 363M156 380L167 361M156 380L131 358M156 380L165 351M156 380L145 343M156 380L154 350M156 380L163 353M27 384L28 354M27 384L35 355M27 384L-3 374M27 384L23 365M27 384L44 373M-3 388L-6 350M-3 388L5 367M-3 388L6 362M-3 388L-15 351M-3 388L25 373M-3 388L-16 365M-3 388L-7 367M259 390L269 363M259 390L229 373M259 390L281 375M259 390L243 359M259 390L249 359M259 390L231 383M107 397L99 367M107 397L137 386M107 397L116 378M107 397L99 372M107 397L113 359M107 397L106 362M61 401L81 376M61 401L46 366M61 401L51 364M61 401L36 385M61 401L72 386M295 411L328 410M295 411L313 403M295 411L279 396M295 411L304 369M295 411L309 384M219 424L224 403M219 424L237 391M219 424L245 396M219 424L204 411M219 424L187 417M219 424L217 388M219 424L223 392M219 424L228 385M256 429L279 410M256 429L249 408M256 429L238 420M256 429L260 408M4 431L7 408M4 431L-7 408M4 431L35 407M4 431L13 409M4 431L25 392M4 431L4 388M4 431L-13 421M122 432L139 405M122 432L140 407M122 432L153 425M122 432L124 386M122 432L137 419M122 432L140 411M122 432L133 414M167 435L165 393M167 435L152 419M167 435L146 406M167 435L161 412M167 435L164 401M83 452L100 428M83 452L78 418M83 452L82 406M83 452L77 430M83 452L111 414M83 452L87 422M83 452L112 442M83 452L60 420M83 452L58 416M83 452L112 428M286 458L309 433M286 458L275 438M286 458L293 431M286 458L305 413M286 458L268 427M286 458L266 419M286 458L267 435M286 458L273 416M286 458L308 439M42 463L67 421M42 463L44 417M42 463L33 415M42 463L39 435M42 463L37 440M42 463L36 427M42 463L12 456M42 463L40 414M42 463L67 425M42 463L46 418M42 463L45 434M209 477L229 455M209 477L210 448M209 477L214 442M209 477L221 437M155 490L140 466M155 490L170 469M155 490L179 476M155 490L169 450M155 490L154 458M155 490L142 460M155 490L145 439M155 490L140 454M155 490L120 456M-2 494L-17 456M-2 494L-10 440M-2 494L27 472M-2 494L4 465M-2 494L-5 468M-2 494L4 468M-2 494L-14 469M263 500L254 444M263 500L285 450M263 500L268 446M263 500L241 454M263 500L305 473M263 500L293 466M75 510L53 461M75 510L43 484M75 510L105 467"/><path fill="none" stroke="#22331a" stroke-width="1" stroke-opacity="0.45" d="M-2 260L12 252M-2 260L-11 252M-2 260L2 244M24 274L13 258M24 274L33 272M-1 284L-5 272M-1 284L-2 261M-1 284L11 276M-1 284L-9 277M-1 284L12 267M-1 284L-9 267M58 288L70 275M58 288L53 267M58 288L54 270M58 288L56 269M58 288L55 275M43 300L61 299M43 300L39 288M43 300L52 292M43 300L41 288M1 308L8 293M1 308L-12 300M1 308L-19 297M1 308L21 301M1 308L8 297M1 308L-1 284M74 308L63 296M74 308L76 292M74 308L71 286M74 308L69 293M74 308L72 294M74 308L90 290M124 330L129 311M124 330L136 317M124 330L124 308M124 330L122 315M124 330L138 313M124 330L133 306M124 330L124 306M22 336L21 310M22 336L30 321M22 336L45 321M22 336L27 320M22 336L34 308M97 337L93 306M97 337L97 309M97 337L119 346M97 337L113 332M97 337L94 313M97 337L92 322M97 337L117 336M97 337L111 318M97 337L80 314M53 337L61 320M53 337L55 322M53 337L66 313M53 337L50 309M157 341L165 312M157 341L147 322M187 347L200 334M187 347L189 323M72 352L56 329M72 352L82 325M72 352L67 332M72 352L67 327M72 352L91 337M72 352L66 326M72 352L57 345M5 357L-13 343M5 357L11 333M5 357L10 338M5 357L4 333M5 357L5 333M5 357L20 343M128 360L142 344M128 360L150 339M128 360L135 332M128 360L139 345M128 360L137 336M210 373L220 348M156 380L160 354M156 380L153 362M156 380L139 364M156 380L150 355M156 380L166 353M156 380L164 362M156 380L147 357M27 384L38 359M27 384L23 356M27 384L24 357M27 384L18 361M-3 388L5 367M-3 388L8 353M-3 388L-14 355M-3 388L7 364M-3 388L6 350M259 390L249 373M259 390L229 373M259 390L261 353M107 397L117 375M107 397L102 378M107 397L91 361M107 397L106 375M107 397L117 366M107 397L105 378M61 401L66 382M61 401L47 364M61 401L43 376M61 401L75 365M61 401L36 414M295 411L305 370M295 411L308 388M295 411L317 378M295 411L284 396M295 411L275 396M295 411L316 414M295 411L272 387M295 411L291 384M219 424L206 395M219 424L212 394M219 424L212 403M219 424L221 392M219 424L225 403M219 424L207 408M256 429L241 402M256 429L248 392M256 429L259 391M4 431L-28 424M4 431L25 420M4 431L32 416M122 432L112 411M122 432L123 406M122 432L108 408M122 432L125 408M122 432L102 399M122 432L106 404M122 432L125 394M122 432L144 439M167 435L165 409M167 435L191 426M167 435L186 396M167 435L168 400M167 435L183 400M83 452L120 440M83 452L72 410M83 452L122 460M83 452L92 430M83 452L102 428M286 458L289 429M286 458L287 429M286 458L273 414M286 458L270 428M286 458L291 432M286 458L294 426M286 458L260 427M286 458L269 433M286 458L306 454M286 458L298 437M286 458L297 414M42 463L19 422M42 463L69 435M42 463L21 427M42 463L50 440M42 463L51 428M42 463L35 422M42 463L30 434M42 463L62 445M42 463L29 430M42 463L26 445M42 463L18 446M42 463L48 439M209 477L198 445M209 477L208 446M209 477L240 449M209 477L188 462M209 477L204 438M209 477L242 457M209 477L198 453M209 477L173 461M155 490L163 438M155 490L170 446M155 490L178 455M155 490L154 460M155 490L153 436M-2 494L-5 452M-2 494L10 471M-2 494L29 461M-2 494L5 456M-2 494L-2 452M-2 494L9 469M-2 494L-17 459M263 500L261 472M263 500L246 466M263 500L259 472M263 500L260 464M263 500L292 454M263 500L253 472M75 510L94 495M75 510L77 469M75 510L28 497M75 510L38 474M75 510L62 468M75 510L96 477M75 510L78 475M75 510L78 463M75 510L106 494"/><path fill="none" stroke="#95b556" stroke-width="1" stroke-opacity="0.45" d="M-2 260L-3 246M-2 260L-1 246M-2 260L-4 241M-2 260L-0 251M-2 260L-1 249M-2 260L-7 251M-2 260L-8 243M24 274L19 254M24 274L23 262M24 274L13 262M24 274L24 259M24 274L29 254M24 274L29 260M58 288L64 272M58 288L59 273M58 288L56 270M43 300L41 285M1 308L1 291M74 308L69 296M74 308L70 293M74 308L62 287M124 330L125 312M124 330L118 316M124 330L122 312M22 336L9 329M22 336L1 337M22 336L26 308M22 336L41 327M53 337L27 340M53 337L46 307M53 337L37 317M157 341L150 328M157 341L158 309M157 341L146 313M157 341L180 323M157 341L177 329M157 341L161 310M187 347L192 322M187 347L190 330M187 347L185 319M187 347L180 333M72 352L92 337M72 352L56 326M5 357L-19 359M5 357L13 339M5 357L-14 335M5 357L19 326M128 360L142 354M128 360L111 344M128 360L143 337M210 373L210 346M210 373L222 359M210 373L216 350M210 373L192 351M210 373L200 343M210 373L198 359M210 373L221 353M156 380L165 363M156 380L147 345M156 380L143 362M27 384L36 347M-3 388L-27 364M-3 388L-9 365M-3 388L-26 365M-3 388L-29 366M-3 388L6 360M259 390L280 371M259 390L246 374M259 390L273 360M259 390L257 367M107 397L106 375M107 397L115 363M107 397L128 372M107 397L101 366M107 397L102 368M107 397L125 381M61 401L81 379M61 401L50 373M61 401L77 380M295 411L294 382M295 411L303 382M295 411L308 377M295 411L310 394M219 424L187 417M219 424L238 401M256 429L273 398M256 429L259 401M256 429L249 405M256 429L247 401M256 429L247 404M256 429L243 403M256 429L255 395M256 429L258 403M4 431L-15 391M4 431L-2 410M4 431L14 387M4 431L33 423M4 431L-7 405M4 431L21 413M4 431L-22 412M4 431L2 401M4 431L28 409M4 431L-7 399M122 432L115 399M122 432L121 403M122 432L156 444M167 435L135 430M167 435L181 404M167 435L163 396M167 435L153 415M167 435L179 403M167 435L148 419M167 435L149 416M83 452L67 429M83 452L94 417M83 452L110 433M83 452L95 474M286 458L255 427M286 458L281 431M286 458L304 429M286 458L313 425M286 458L285 420M286 458L292 425M286 458L284 430M42 463L54 418M209 477L215 440M209 477L242 474M209 477L208 448M209 477L190 457M209 477L220 445M209 477L184 444M155 490L182 491M155 490L140 469M155 490L127 457M155 490L171 465M-2 494L1 466M-2 494L-2 441M-2 494L30 479M-2 494L16 460M-2 494L-15 465M-2 494L2 454M263 500L269 473M263 500L278 461M263 500L244 476M263 500L268 468M263 500L285 483M263 500L246 465M75 510L94 496M75 510L47 503M75 510L89 484M75 510L71 474"/><path fill="none" stroke="#8aab4c" stroke-width="1" stroke-opacity="0.45" d="M-2 260L1 250M-2 260L-10 257M24 274L7 267M24 274L24 258M24 274L10 263M-1 284L-1 266M-1 284L-8 275M-1 284L-2 270M-1 284L-1 263M58 288L70 272M43 300L33 280M43 300L56 284M43 300L60 289M43 300L54 280M43 300L24 291M43 300L47 278M1 308L-5 293M1 308L-8 287M1 308L5 289M74 308L67 292M74 308L86 296M74 308L88 303M74 308L72 282M124 330L122 303M124 330L115 303M124 330L125 311M124 330L127 310M124 330L101 321M22 336L5 316M22 336L24 314M22 336L21 316M22 336L4 317M22 336L32 306M97 337L82 318M97 337L95 317M97 337L103 318M97 337L72 346M53 337L48 320M53 337L48 313M53 337L41 328M53 337L42 313M53 337L53 311M53 337L42 312M157 341L166 315M157 341L166 326M157 341L136 325M157 341L150 320M187 347L209 346M187 347L182 319M187 347L189 322M187 347L174 322M187 347L182 321M187 347L208 332M187 347L181 318M187 347L198 326M72 352L92 335M72 352L59 328M72 352L80 333M72 352L77 335M5 357L13 329M5 357L7 329M5 357L-16 348M5 357L8 329M128 360L122 340M128 360L117 344M128 360L142 352M128 360L149 359M128 360L130 343M128 360L104 345M128 360L118 339M210 373L187 362M210 373L230 346M156 380L144 354M156 380L149 349M156 380L170 362M156 380L133 361M156 380L174 349M27 384L22 356M27 384L42 403M27 384L6 378M27 384L19 365M27 384L25 362M27 384L34 357M27 384L44 363M27 384L14 367M27 384L11 371M-3 388L-17 364M-3 388L-34 379M-3 388L-16 368M-3 388L-23 364M-3 388L9 354M-3 388L-2 361M-3 388L25 378M259 390L265 359M259 390L259 369M259 390L264 368M259 390L264 364M259 390L268 367M259 390L249 354M259 390L266 369M107 397L131 382M107 397L101 368M107 397L130 379M107 397L112 370M107 397L107 356M61 401L53 370M61 401L75 385M61 401L70 384M61 401L60 372M61 401L82 391M61 401L30 396M61 401L42 369M61 401L93 392M61 401L56 361M295 411L283 374M295 411L328 402M295 411L274 382M295 411L290 390M295 411L268 387M295 411L262 422M295 411L309 372M219 424L241 409M219 424L227 399M219 424L234 397M219 424L206 387M219 424L230 396M256 429L271 397M256 429L244 400M256 429L289 411M4 431L-2 393M4 431L-15 398M4 431L-15 426M4 431L15 412M4 431L6 403M122 432L147 409M122 432L128 409M122 432L133 395M122 432L136 400M122 432L109 397M122 432L143 405M167 435L165 395M167 435L187 400M167 435L175 413M167 435L178 402M167 435L172 400M167 435L148 409M83 452L90 425M83 452L110 427M83 452L96 434M83 452L95 433M83 452L92 426M83 452L73 407M286 458L267 435M286 458L297 431M42 463L33 430M42 463L26 426M42 463L47 437M209 477L180 483M209 477L234 449M209 477L214 444M209 477L187 452M209 477L202 443M209 477L201 444M209 477L214 430M209 477L198 439M155 490L150 436M155 490L147 452M155 490L175 457M155 490L169 437M155 490L124 466M155 490L166 457M155 490L180 466M155 490L190 453M155 490L170 462M155 490L147 440M155 490L131 461M155 490L134 445M155 490L122 451M155 490L172 443M155 490L152 460M-2 494L-29 462M-2 494L-43 473M263 500L257 472M263 500L256 469M263 500L255 472M263 500L237 499M263 500L256 458M263 500L264 458M263 500L296 493M263 500L236 481M75 510L84 480M75 510L54 499M75 510L67 458M75 510L78 467M75 510L84 456M75 510L83 470"/><path fill="none" stroke="#a6c262" stroke-width="1" stroke-opacity="0.45" d="M-2 260L6 249M-2 260L-7 248M24 274L22 263M24 274L40 274M24 274L11 279M24 274L34 256M-1 284L10 266M-1 284L3 261M-1 284L11 278M-1 284L12 280M-1 284L9 270M58 288L52 276M58 288L52 275M58 288L64 276M58 288L51 277M43 300L57 286M43 300L34 293M43 300L50 284M43 300L33 283M1 308L10 285M1 308L6 288M1 308L7 295M1 308L12 290M74 308L74 293M74 308L86 314M124 330L120 308M124 330L131 318M124 330L117 318M124 330L99 331M124 330L132 313M22 336L35 320M22 336L23 321M22 336L24 318M22 336L30 306M22 336L14 313M97 337L93 318M97 337L102 318M97 337L83 324M53 337L60 307M53 337L35 328M53 337L48 311M157 341L147 327M157 341L178 329M157 341L133 328M157 341L165 312M157 341L156 316M157 341L168 325M187 347L184 326M187 347L197 318M72 352L52 349M72 352L89 334M72 352L58 333M72 352L86 328M72 352L79 325M72 352L69 330M72 352L82 338M72 352L61 339M5 357L9 328M5 357L-4 331M5 357L15 330M5 357L-4 331M5 357L17 332M5 357L18 332M128 360L127 332M128 360L133 338M128 360L111 340M128 360L104 356M128 360L118 341M210 373L211 353M210 373L205 346M210 373L189 365M210 373L204 346M210 373L217 342M156 380L162 349M27 384L17 364M27 384L13 349M27 384L49 371M27 384L9 368M27 384L30 360M27 384L13 350M-3 388L12 375M-3 388L1 367M-3 388L23 372M259 390L239 364M259 390L262 370M259 390L270 353M259 390L244 366M107 397L99 381M107 397L95 373M107 397L105 358M107 397L121 376M61 401L67 375M61 401L52 374M61 401L57 363M61 401L91 393M61 401L57 380M61 401L65 362M295 411L295 381M295 411L306 392M295 411L298 379M295 411L302 375M295 411L283 383M295 411L279 396M295 411L296 389M219 424L218 395M219 424L232 392M219 424L245 395M219 424L252 404M219 424L231 390M219 424L252 404M256 429L261 400M256 429L254 397M256 429L279 401M256 429L255 399M256 429L242 389M256 429L246 403M256 429L267 397M4 431L17 409M4 431L-15 420M4 431L3 406M4 431L2 403M122 432L124 388M122 432L103 402M122 432L145 403M122 432L128 403M167 435L184 422M167 435L185 410M167 435L150 408M167 435L181 418M167 435L171 390M167 435L201 431M83 452L97 416M83 452L77 418M83 452L51 421M83 452L87 429M83 452L84 420M83 452L96 410M83 452L81 421M286 458L308 451M286 458L257 422M42 463L52 422M42 463L42 424M42 463L45 429M42 463L47 426M209 477L222 428M209 477L208 438M209 477L201 447M209 477L204 449M209 477L207 437M209 477L219 437M209 477L179 454M209 477L203 452M155 490L112 501M155 490L163 445M155 490L169 454M-2 494L-9 442M-2 494L38 509M-2 494L11 454M-2 494L-5 460M-2 494L4 456M-2 494L40 488M-2 494L-11 465M-2 494L9 442M-2 494L-3 437M263 500L238 456M263 500L273 473M263 500L271 456M263 500L266 464M263 500L251 454M263 500L275 475M75 510L45 473M75 510L75 481M75 510L100 468M75 510L65 484M75 510L50 474M75 510L77 459M75 510L94 479M75 510L59 487M75 510L89 479"/><path fill="none" stroke="#1d2b16" stroke-width="1" stroke-opacity="0.45" d="M-2 260L-11 249M24 274L32 260M24 274L13 274M24 274L17 260M-1 284L-5 274M-1 284L10 265M-1 284L-7 275M-1 284L-7 265M58 288L48 270M58 288L65 268M58 288L61 275M58 288L54 276M58 288L67 279M43 300L57 299M43 300L50 282M43 300L49 280M43 300L29 283M43 300L39 288M1 308L-7 282M1 308L-5 297M1 308L20 299M1 308L-8 284M74 308L79 294M74 308L83 284M74 308L70 293M124 330L128 315M124 330L118 301M124 330L118 308M22 336L33 326M22 336L34 325M22 336L39 323M22 336L9 318M97 337L91 308M97 337L109 344M53 337L55 322M53 337L34 323M53 337L75 321M53 337L63 321M53 337L43 307M53 337L79 333M157 341L169 317M157 341L157 320M157 341L151 324M157 341L165 316M157 341L149 314M157 341L152 319M157 341L137 329M157 341L146 325M187 347L205 335M187 347L180 329M187 347L181 321M187 347L195 326M187 347L200 340M187 347L185 319M72 352L77 330M5 357L3 337M5 357L-7 347M128 360L122 343M128 360L125 337M128 360L115 342M210 373L196 364M210 373L200 358M210 373L229 371M210 373L238 371M210 373L202 357M210 373L200 360M210 373L205 355M210 373L199 361M210 373L185 360M210 373L197 354M156 380L150 347M156 380L162 347M156 380L154 351M156 380L158 351M156 380L149 360M156 380L170 346M156 380L164 357M27 384L37 357M27 384L10 351M27 384L19 357M27 384L36 348M27 384L23 358M-3 388L5 363M-3 388L9 369M-3 388L-32 374M-3 388L-5 354M259 390L262 370M259 390L263 371M259 390L241 366M259 390L249 358M259 390L259 369M259 390L257 368M259 390L252 368M107 397L130 376M107 397L97 376M107 397L125 391M107 397L136 380M61 401L65 373M61 401L69 381M61 401L61 363M61 401L50 376M295 411L294 385M295 411L316 376M219 424L196 406M219 424L243 426M219 424L209 397M219 424L225 380M219 424L230 406M219 424L214 402M219 424L218 403M256 429L248 402M256 429L287 411M256 429L254 396M256 429L263 388M256 429L245 410M256 429L233 406M256 429L251 389M256 429L270 401M256 429L245 390M4 431L-7 398M4 431L-2 396M4 431L12 409M4 431L-0 409M4 431L13 387M4 431L23 416M122 432L131 410M122 432L144 409M122 432L137 403M122 432L127 386M122 432L92 404M122 432L135 407M122 432L92 413M167 435L132 429M167 435L173 413M167 435L175 401M167 435L155 404M167 435L166 394M167 435L151 405M83 452L98 427M83 452L59 443M83 452L67 430M83 452L105 445M83 452L84 406M286 458L321 439M286 458L270 433M286 458L299 419M286 458L293 428M286 458L279 412M286 458L271 412M42 463L31 426M42 463L43 431M42 463L40 416M42 463L50 414M42 463L57 418M42 463L36 439M42 463L18 425M209 477L176 454M209 477L226 458M209 477L201 446M209 477L221 441M209 477L196 448M155 490L150 459M155 490L162 446M155 490L173 438M155 490L156 459M-2 494L-7 455M-2 494L-13 456M-2 494L-2 468M-2 494L-38 466M-2 494L30 459M-2 494L17 468M-2 494L18 444M-2 494L1 447M-2 494L-8 454M263 500L247 465M263 500L267 464M263 500L273 454M263 500L249 448M263 500L232 498M263 500L254 444M263 500L249 478M263 500L283 483M263 500L258 452M75 510L50 462M75 510L95 486M75 510L59 475M75 510L61 480M75 510L75 451M75 510L54 493M75 510L68 480M75 510L61 485M75 510L105 468M75 510L63 482M75 510L76 476"/></g></g>
<polygon points="0.0,248.0 20.0,249.0 40.0,258.0 60.0,276.0 80.0,275.0 90.0,281.0 118.0,310.0 163.0,318.0 197.0,332.0 216.0,353.0 246.0,367.0 275.0,365.0 287.0,377.0 310.0,385.0 345.0,387.0 345.0,459.0 0.0,459.0" fill="#000" filter="url(#ntex2)" opacity="0.75"/>
<polygon points="0.0,248.0 20.0,249.0 40.0,258.0 60.0,276.0 80.0,275.0 90.0,281.0 118.0,310.0 163.0,318.0 197.0,332.0 216.0,353.0 246.0,367.0 275.0,365.0 287.0,377.0 310.0,385.0 345.0,387.0 345.0,459.0 0.0,459.0" fill="#000" filter="url(#ntex)" opacity="0.3"/>
<g filter="url(#b15)"><polygon points="275.0,365.0 287.0,377.0 310.0,385.0 345.0,387.0 345.0,459.0 240.0,459.0" fill="#2a3b27" opacity="0.85"/></g>
<g fill="url(#tg)" clip-path="url(#cpd)"><ellipse cx="295" cy="401" rx="7" ry="6"/><ellipse cx="301" cy="391" rx="9" ry="7"/><ellipse cx="292" cy="423" rx="12" ry="10"/><ellipse cx="274" cy="380" rx="7" ry="6"/><ellipse cx="287" cy="466" rx="11" ry="9"/><ellipse cx="308" cy="470" rx="6" ry="5"/><ellipse cx="273" cy="388" rx="11" ry="9"/><ellipse cx="335" cy="404" rx="11" ry="9"/><ellipse cx="302" cy="430" rx="11" ry="9"/><ellipse cx="331" cy="426" rx="8" ry="6"/><ellipse cx="283" cy="412" rx="12" ry="9"/><ellipse cx="349" cy="458" rx="10" ry="8"/><ellipse cx="271" cy="419" rx="12" ry="10"/><ellipse cx="311" cy="435" rx="10" ry="8"/><ellipse cx="315" cy="435" rx="9" ry="7"/><ellipse cx="303" cy="465" rx="8" ry="7"/><ellipse cx="320" cy="465" rx="8" ry="6"/><ellipse cx="281" cy="371" rx="7" ry="5"/><ellipse cx="288" cy="419" rx="6" ry="5"/><ellipse cx="342" cy="427" rx="10" ry="8"/><ellipse cx="347" cy="400" rx="9" ry="7"/><ellipse cx="347" cy="461" rx="11" ry="9"/><ellipse cx="293" cy="460" rx="6" ry="5"/><ellipse cx="279" cy="425" rx="6" ry="5"/><ellipse cx="279" cy="468" rx="8" ry="6"/><ellipse cx="281" cy="456" rx="7" ry="6"/><ellipse cx="338" cy="408" rx="8" ry="6"/><ellipse cx="336" cy="393" rx="12" ry="9"/><ellipse cx="276" cy="376" rx="7" ry="5"/><ellipse cx="346" cy="397" rx="7" ry="6"/><ellipse cx="318" cy="412" rx="11" ry="9"/><ellipse cx="338" cy="421" rx="10" ry="8"/><ellipse cx="346" cy="406" rx="12" ry="9"/><ellipse cx="284" cy="446" rx="12" ry="10"/><ellipse cx="272" cy="384" rx="11" ry="9"/><ellipse cx="301" cy="430" rx="9" ry="8"/></g>
</svg>

<!-- remove -->
<svg style="position:absolute;left:400px;top:968px" width="40" height="45" viewBox="0 0 40 45"><path d="M6.1 7.2 H13.1 L15.1 5.2 H24.7 L26.7 7.2 H33.9 V10.8 H6.1 Z" fill="#b93335"/><path d="M8.2 13 H31.8 L31.8 37.7 Q31.8 40.7 28.8 40.7 H11.2 Q8.2 40.7 8.2 37.7 Z" fill="#b93335"/></svg>
<div class="a" style="left:451px;top:978px;font-size:28px;font-weight:bold;color:#b93335;">Remove</div>

<!-- form -->
<div class="a" style="left:932px;top:494px;font-size:28px;font-weight:bold;">Title</div>
<div class="box" style="left:932px;top:530px;width:1270px;height:59px;border:2px solid #a2a9b1;background:#fff;"></div>
<div class="a" style="left:951px;top:546px;font-size:26px;color:#000;letter-spacing:-0.12px;">Panorama-cupra</div>

<div class="a" style="left:932px;top:670px;font-size:28px;font-weight:bold;">Caption</div>
<div class="a" style="left:932px;top:715px;font-size:28px;color:#54595d;">One-line explanation.</div>
<div class="box" style="left:932px;top:762px;width:1270px;height:186px;border:2px solid #d5d8dc;background:#f8f9fa;"></div>
<div class="box" style="left:954px;top:784px;width:1226px;height:64px;border:2px solid #a2a9b1;background:#f8f9fa;"></div>
<div class="a" style="left:980px;top:803px;font-size:28px;">English</div>
<svg style="position:absolute;left:2124px;top:801px" width="40" height="30" viewBox="0 0 40 30"><path d="M12 10.5 L20 18.5 L28 10.5" fill="none" stroke="#202122" stroke-width="3"/></svg>
<div class="box" style="left:954px;top:862px;width:1226px;height:64px;border:2px solid #a2a9b1;background:#fff;"></div>

<div class="box" style="left:932px;top:970px;width:563px;height:64px;border:2px solid #a2a9b1;background:#f8f9fa;"></div>
<svg style="position:absolute;left:960px;top:986px" width="32" height="32" viewBox="0 0 32 32"><rect x="14.1" y="4.2" width="3.8" height="23.6" fill="#202122"/><rect x="4.1" y="14.2" width="23.7" height="3.5" fill="#202122"/></svg>
<div class="a" style="left:1011px;top:989px;font-size:28px;font-weight:bold;">Add a caption in another language</div>

<div class="a" style="left:932px;top:1115px;font-size:28px;font-weight:bold;">Description</div>
<div class="a" style="left:932px;top:1160px;font-size:28px;color:#54595d;">We recommend providing detailed information on this work if you can.</div>
<div class="box" style="left:932px;top:1207px;width:40px;height:40px;border:2px solid #72777d;background:#fff;"></div>
<div class="a" style="left:984px;top:1214px;font-size:28px;">Same as caption</div>
<div class="box" style="left:932px;top:1258px;width:1270px;height:226px;border:2px solid #d5d8dc;background:#f8f9fa;"></div>
<div class="box" style="left:954px;top:1280px;width:1226px;height:64px;border:2px solid #a2a9b1;background:#f8f9fa;"></div>
<div class="a" style="left:980px;top:1299px;font-size:28px;">Italian</div>
<svg style="position:absolute;left:2124px;top:1297px" width="40" height="30" viewBox="0 0 40 30"><path d="M12 10.5 L20 18.5 L28 10.5" fill="none" stroke="#202122" stroke-width="3"/></svg>
<div class="box" style="left:954px;top:1358px;width:1226px;height:104px;border:2px solid #a2a9b1;background:#fff;"></div>
<div class="a" style="left:972px;top:1377px;font-size:28px;color:#000;letter-spacing:0.05px;">Cupra Marittima {{Load via app WLM.itlyear=2024lsource=wizard}}</div>

</body></html>
